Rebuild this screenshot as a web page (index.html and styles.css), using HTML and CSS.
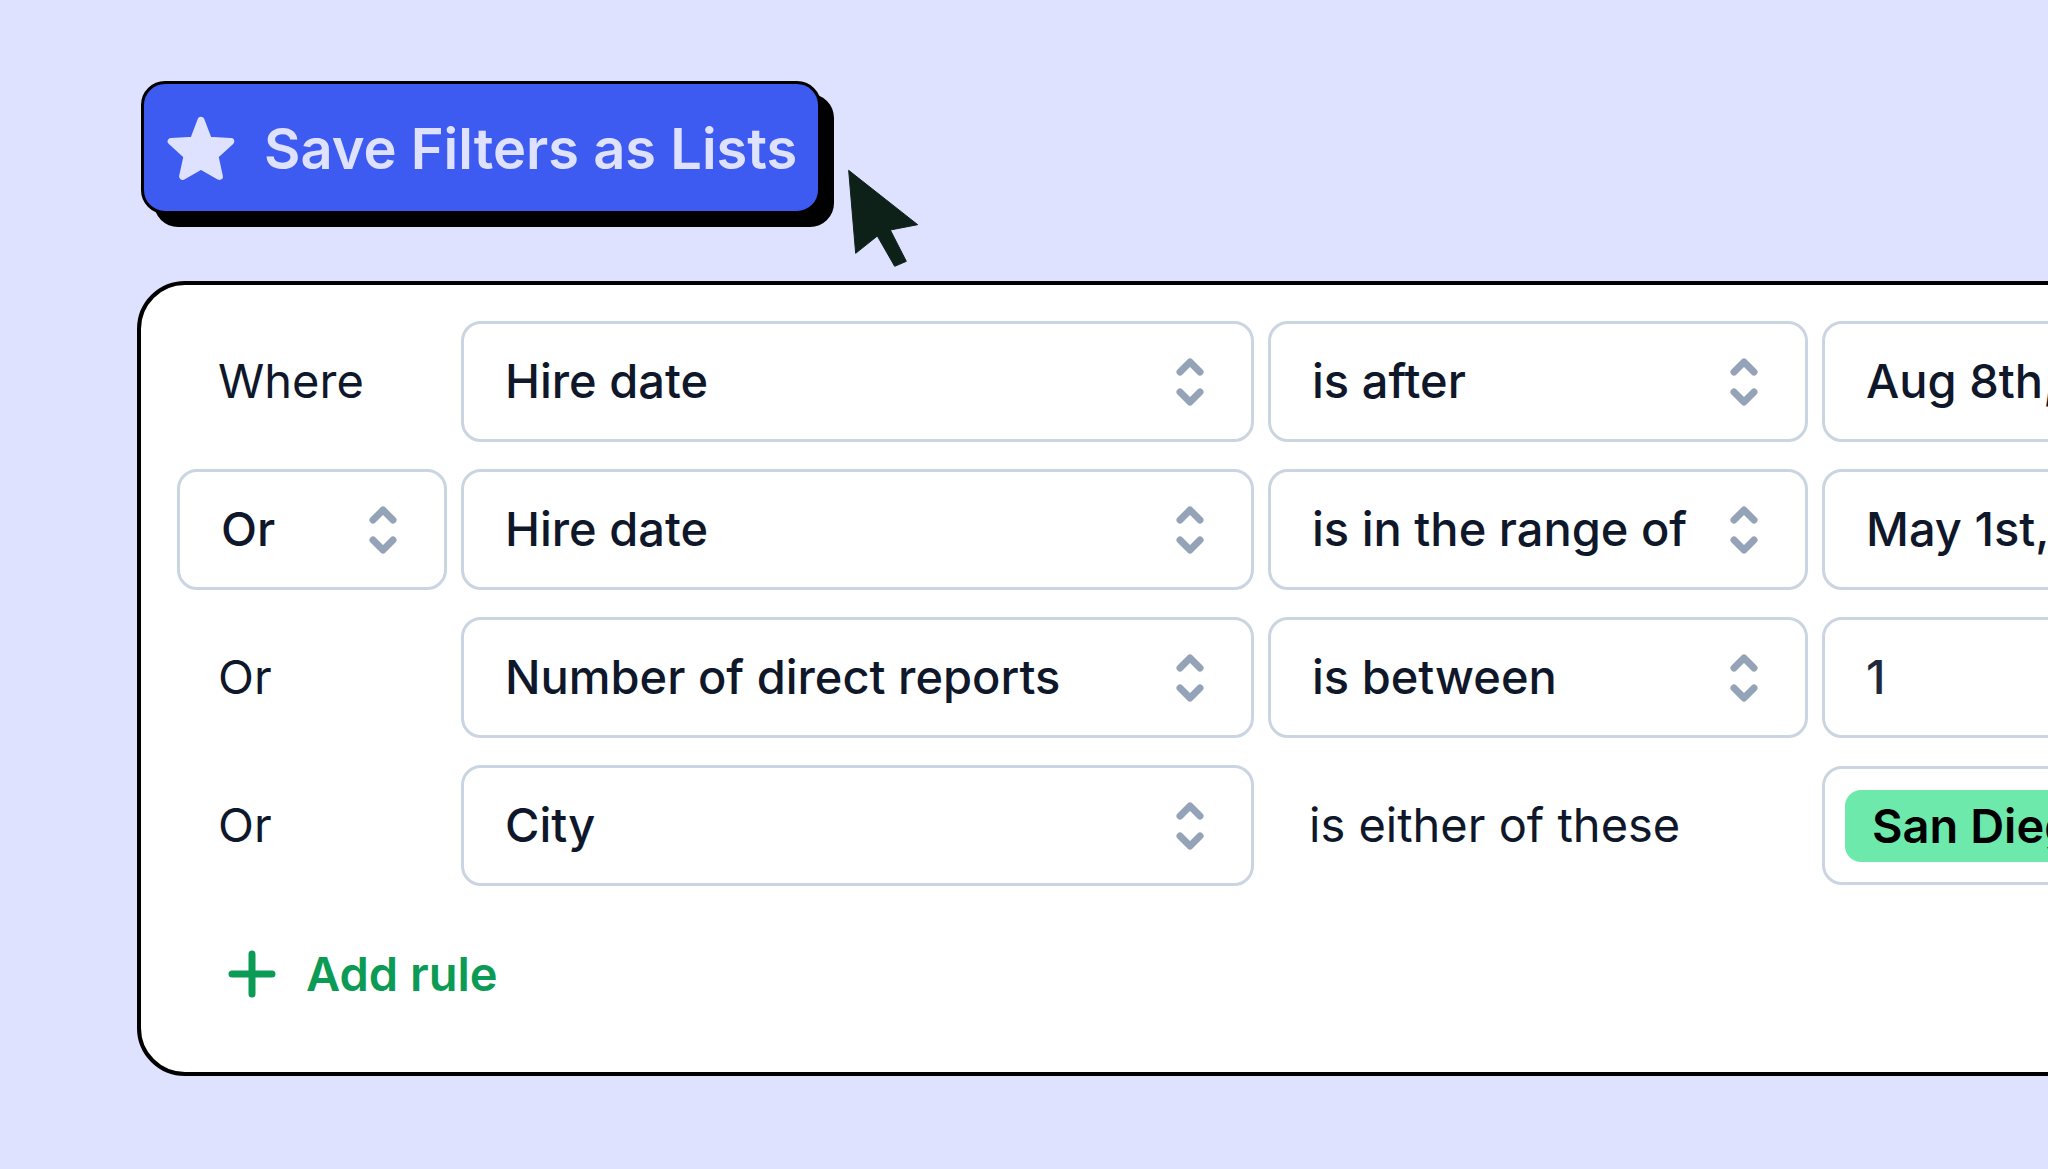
FILE: index.html
```
<!DOCTYPE html>
<html lang="en">
<head>
  <meta charset="UTF-8" />
  <meta name="viewport" content="width=device-width, initial-scale=1.0"/>
  <title>Save Filters as Lists</title>
  <link rel="stylesheet" href="styles.css">
</head>
<body>

<!-- shared icons -->
<svg class="sprite" aria-hidden="true">
  <symbol id="chevrons" viewBox="0 0 48 48">
    <path d="M14 14L24 4l10 10M14 34l10 10 10-10" fill="none" stroke="currentColor" stroke-width="7" stroke-linecap="round" stroke-linejoin="round"/>
  </symbol>
</svg>

<header class="toolbar">
  <button type="button" class="save-button">
    <svg class="star" viewBox="0 0 72 72" aria-hidden="true">
      <path d="M36 7.3L43.6 27.2 65.8 28.4 49.9 42.8 54.4 63.4 36 53 17.6 63.4 22.1 42.8 6.2 28.4 28.4 27.2Z" fill="currentColor" stroke="currentColor" stroke-width="7" stroke-linejoin="round"/>
    </svg>
    Save Filters as Lists
  </button>
  <svg class="cursor" viewBox="950 295 216 297" aria-hidden="true">
    <path d="M955 299L1162 462 1080 478 1128 572 1093 587 1041 496 976 548Z" fill="currentColor" stroke="currentColor" stroke-width="3" stroke-linejoin="round"/>
  </svg>
</header>

<form class="panel">
  <div class="rule">
    <span class="text">Where</span>
    <div class="select">
      <select aria-label="Field 1"><option>Hire date</option></select>
      <svg class="chevrons" aria-hidden="true"><use href="#chevrons"/></svg>
    </div>
    <div class="select">
      <select aria-label="Condition 1"><option>is after</option></select>
      <svg class="chevrons" aria-hidden="true"><use href="#chevrons"/></svg>
    </div>
    <input class="field" type="text" aria-label="Value 1" value="Aug 8th, 2022">
  </div>

  <div class="rule">
    <div class="select">
      <select aria-label="Operator"><option>Or</option><option>And</option></select>
      <svg class="chevrons" aria-hidden="true"><use href="#chevrons"/></svg>
    </div>
    <div class="select">
      <select aria-label="Field 2"><option>Hire date</option></select>
      <svg class="chevrons" aria-hidden="true"><use href="#chevrons"/></svg>
    </div>
    <div class="select">
      <select aria-label="Condition 2"><option>is in the range of</option></select>
      <svg class="chevrons" aria-hidden="true"><use href="#chevrons"/></svg>
    </div>
    <input class="field" type="text" aria-label="Value 2" value="May 1st, 2022">
  </div>

  <div class="rule">
    <span class="text">Or</span>
    <div class="select">
      <select aria-label="Field 3"><option>Number of direct reports</option></select>
      <svg class="chevrons" aria-hidden="true"><use href="#chevrons"/></svg>
    </div>
    <div class="select">
      <select aria-label="Condition 3"><option>is between</option></select>
      <svg class="chevrons" aria-hidden="true"><use href="#chevrons"/></svg>
    </div>
    <input class="field number" type="text" inputmode="numeric" aria-label="Value 3" value="1">
  </div>

  <div class="rule">
    <span class="text">Or</span>
    <div class="select">
      <select aria-label="Field 4"><option>City</option></select>
      <svg class="chevrons" aria-hidden="true"><use href="#chevrons"/></svg>
    </div>
    <span class="text">is either of these</span>
    <div class="tags">
      <span class="tag">San Diego</span>
    </div>
  </div>

  <button type="button" class="add-button">
    <svg class="plus" viewBox="0 0 48 48" aria-hidden="true">
      <path d="M24 4v40M4 24h40" fill="none" stroke="currentColor" stroke-width="7" stroke-linecap="round"/>
    </svg>
    Add rule
  </button>
</form>

</body>
</html>
```

FILE: styles.css
```
* {
  box-sizing: border-box;
}

body {
  font-family: Inter, 'Liberation Sans', sans-serif;
  font-size: 47px;
  color: #0f172a;
  background-color: #dfe2ff;
  margin: 0;
  padding: 81px 0 81px 137px;
  overflow: hidden;
}

button,
input,
select {
  font: inherit;
  color: inherit;
}

button {
  display: flex;
  align-items: center;
  cursor: pointer;
}

.sprite {
  display: none;
}

.toolbar {
  position: relative;
  width: fit-content;
  margin: 0 0 67px 4px;
}

.save-button {
  gap: 27px;
  height: 133px;
  padding: 3px 21px 0;
  font-size: 56px;
  font-weight: 600;
  white-space: nowrap;
  color: #dfe2ff;
  background-color: #3d5af1;
  border: 3px solid #000;
  border-radius: 24px;
  box-shadow: 13px 13px 0 #000;
}

.star {
  width: 72px;
  height: 72px;
}

/* mouse pointer lying over the page */
.cursor {
  position: absolute;
  top: 88px;
  left: calc(100% + 26px);
  width: 72px;
  height: 99px;
  color: #0d2119;
}

/* runs past the right edge of the window */
.panel {
  display: grid;
  gap: 27px;
  margin-right: -400px;
  padding: 36px 36px 38px;
  background-color: white;
  border: 4px solid #000;
  border-radius: 48px;
}

.rule {
  display: grid;
  grid-template-columns: 270px 793fr 540fr 586fr;
  align-items: center;
  gap: 14px;
  height: 121px;
}

.text {
  padding: 0 0 3px 41px;
  white-space: nowrap;
}

.select {
  position: relative;
}

select,
.field,
.tags {
  width: 100%;
  height: 121px;
  background-color: white;
  border: 3px solid #cbd5e1;
  border-radius: 20px;
}

select,
.field {
  padding: 0 41px 3px;
  font-weight: 500;
}

select {
  appearance: none;
  padding-right: 88px;
}

.chevrons {
  position: absolute;
  top: calc(50% - 24px);
  right: 40px;
  width: 48px;
  height: 48px;
  color: #94a3b8;
  pointer-events: none;
}

.number {
  color: #1e293b;
}

.tags {
  display: flex;
  align-items: center;
  height: 119px;
  padding: 0 20px;
}

.tag {
  padding: 0 27px;
  font-weight: 600;
  line-height: 72px;
  white-space: nowrap;
  color: #000;
  background-color: #6ee9ac;
  border-radius: 16px;
}

.add-button {
  gap: 30px;
  height: 121px;
  padding: 0 51px;
  justify-self: start;
  font-weight: 600;
  color: #0b9b54;
  background: none;
  border: none;
}

.plus {
  width: 48px;
  height: 48px;
}
```
